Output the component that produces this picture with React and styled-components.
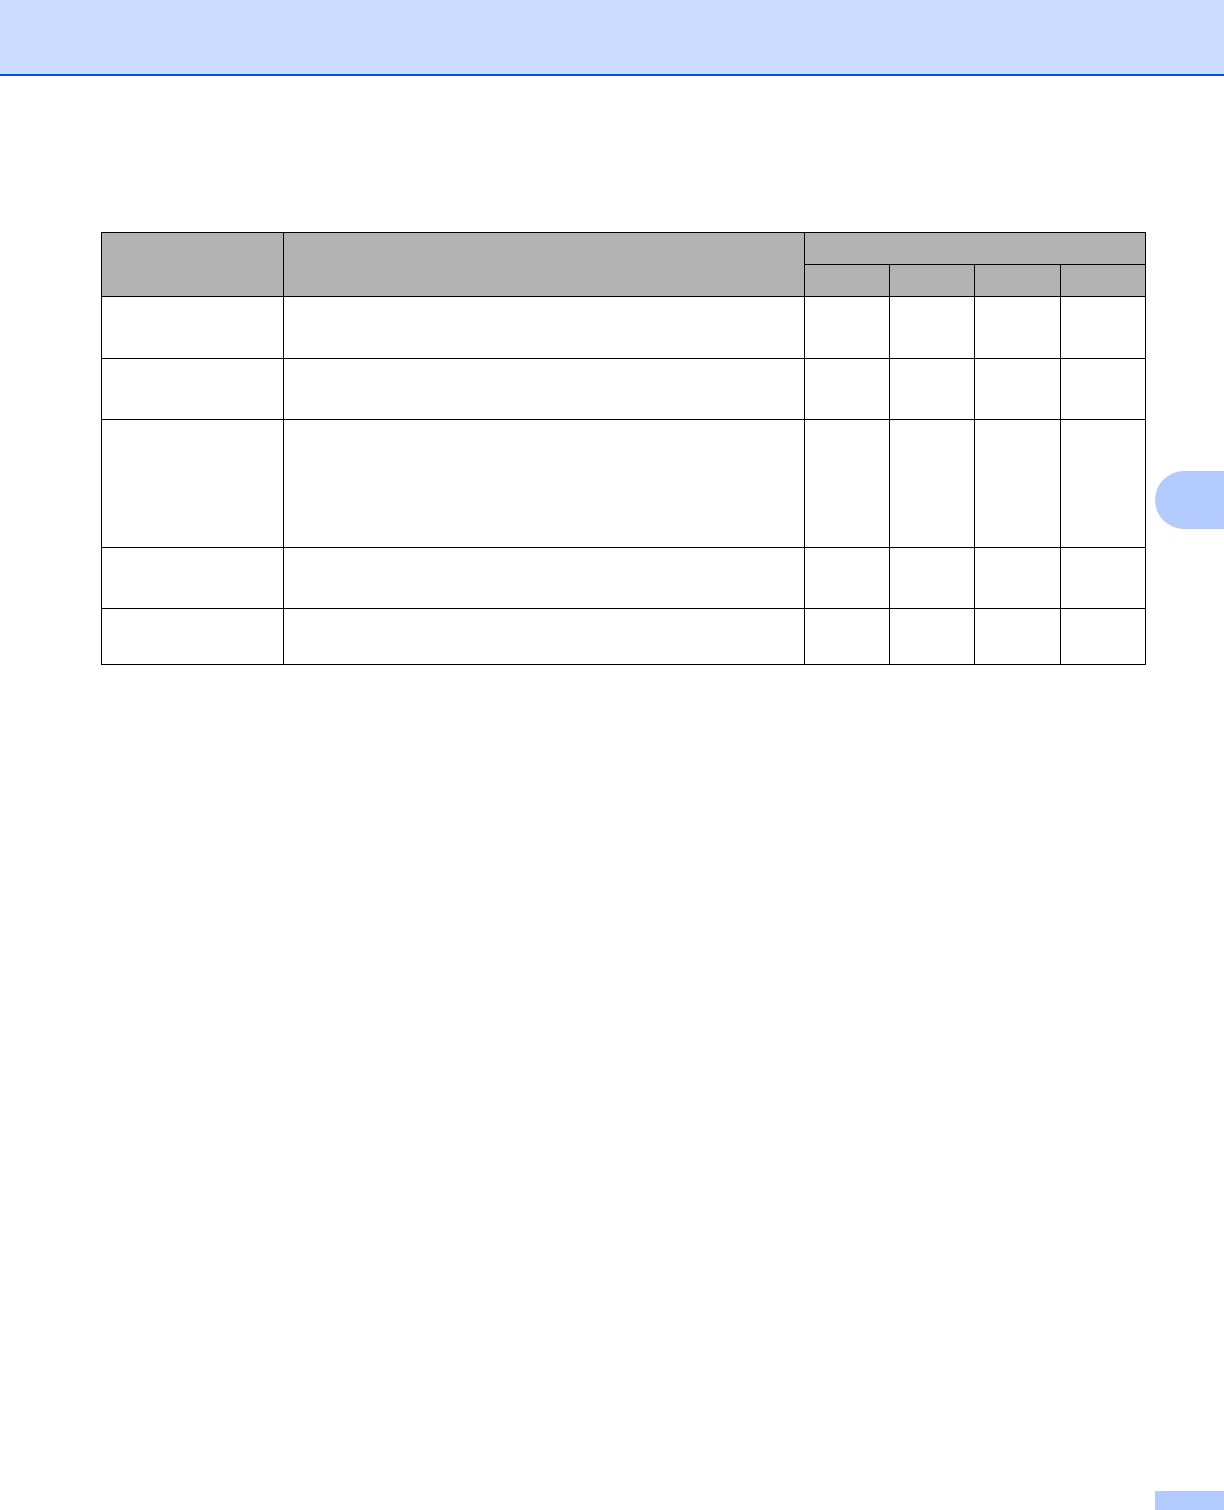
import React from 'react';
import styled, { createGlobalStyle } from 'styled-components';

const GlobalStyle = createGlobalStyle`
  html, body {
    margin: 0;
    padding: 0;
    background: #ffffff;
    font-family: "Liberation Sans", Arial, sans-serif;
  }
`;

const Page = styled.div`
  position: relative;
  width: 1224px;
  min-height: 1510px;
  display: flex;
  flex-direction: column;
  background: #ffffff;
  overflow: hidden;
`;

const Header = styled.header`
  height: 74px;
  background: #ccdcff;
  border-bottom: 2px solid #0050f0;
`;

const Content = styled.main`
  padding: 156px 0 0 101px;
`;

const Grid = styled.div`
  display: grid;
  grid-template-columns: 181px 520px 84px 84px 85px 84px;
  grid-template-rows: 31px 31px 61px 60px 127px 60px 55px;
  gap: 1px;
  padding: 1px;
  width: fit-content;
  background: #000000;
`;

const Cell = styled.div`
  background: ${p => (p.$head ? '#b3b3b3' : '#ffffff')};
  grid-row: ${p => p.$rowSpan ? `span ${p.$rowSpan}` : 'auto'};
  grid-column: ${p => p.$colSpan ? `span ${p.$colSpan}` : 'auto'};
  font-size: 14px;
  color: #000000;
`;

const SideTab = styled.div`
  position: absolute;
  right: 0;
  top: 471px;
  width: 69px;
  height: 58px;
  border-radius: 29px 0 0 29px;
  background: #b3caff;
`;

const Footer = styled.footer`
  margin-top: auto;
  display: flex;
  justify-content: flex-end;
`;

const PageBox = styled.div`
  width: 69px;
  height: 19px;
  background: #b3caff;
`;

const rows = 5;
const subCols = 4;

export default function App() {
  return (
    <>
      <GlobalStyle />
      <Page>
        <Header />
        <Content>
          <Grid>
            <Cell $head $rowSpan={2} />
            <Cell $head $rowSpan={2} />
            <Cell $head $colSpan={4} />
            {Array.from({ length: subCols }).map((_, i) => (
              <Cell key={`s${i}`} $head />
            ))}
            {Array.from({ length: rows }).map((_, r) =>
              Array.from({ length: 2 + subCols }).map((_, c) => (
                <Cell key={`${r}-${c}`} />
              ))
            )}
          </Grid>
        </Content>
        <SideTab />
        <Footer>
          <PageBox />
        </Footer>
      </Page>
    </>
  );
}
